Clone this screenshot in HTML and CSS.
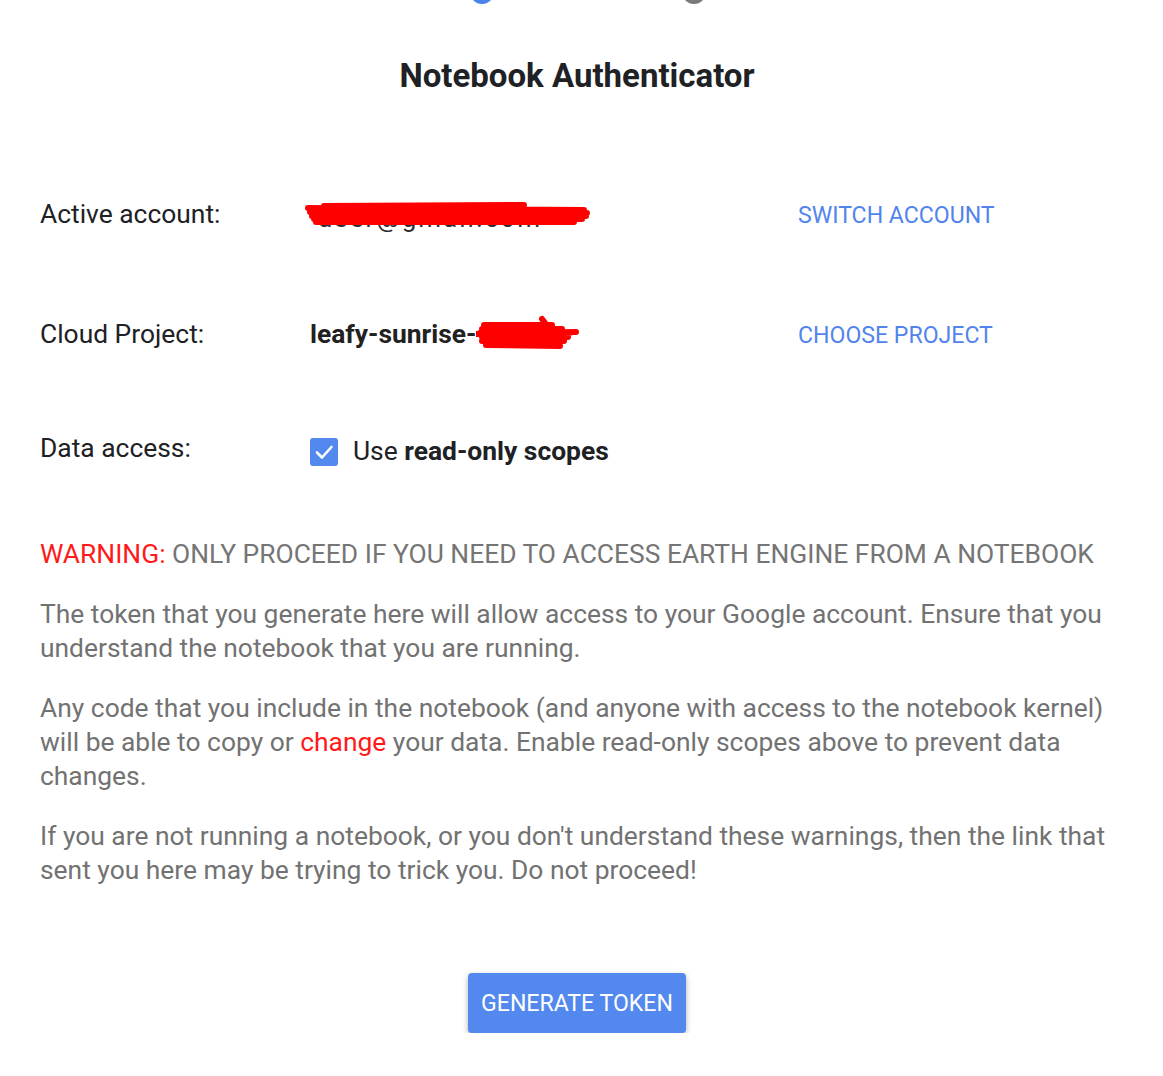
FILE: index.html
```html
<!DOCTYPE html>
<html lang="en">
<head>
<meta charset="utf-8">
<title>Notebook Authenticator</title>
<link rel="stylesheet" href="styles.css">
</head>
<body>
<div class="page">
  <div class="stepper">
    <span class="dot dot-active"></span>
    <span class="dot dot-idle"></span>
  </div>
  <h1 class="title">Notebook Authenticator</h1>

  <div class="settings">
    <div class="label">Active account:</div>
    <div class="value">
      <span class="redacted redacted-account">
        <span class="hidden-text">u&#8203;ser@gmail.com</span>
        <svg class="scribble" width="290" height="34" viewBox="0 0 290 34">
          <path d="M4 10 L280 12 M6 14 L283 15 M8 18 L282 18 M10 21 L278 21 M12 24 L270 24 M20 8 L220 7" stroke="#ff0000" stroke-width="6" stroke-linecap="round" fill="none"/>
        </svg>
      </span>
    </div>
    <div class="action"><a class="link" href="#">SWITCH ACCOUNT</a></div>

    <div class="label">Cloud Project:</div>
    <div class="value">
      <strong class="project">leafy-sunrise-</strong><span class="redacted redacted-project">
        <svg class="scribble" width="106" height="40" viewBox="0 0 106 40">
          <path d="M4 18 L94 18 M6 22 L92 22 M6 26 L88 26 M6 14 L86 14 M10 30 L84 31 M8 10 L76 10 M66 4 L72 12 M0 19 L100 17" stroke="#ff0000" stroke-width="6" stroke-linecap="round" fill="none"/>
        </svg>
      </span>
    </div>
    <div class="action"><a class="link" href="#">CHOOSE PROJECT</a></div>

    <div class="label">Data access:</div>
    <div class="value">
      <label class="check">
        <span class="box">
          <svg width="28" height="28" viewBox="0 0 28 28"><path d="M7 14.5 L12 19.5 L21.5 9" stroke="#fff" stroke-width="2.6" fill="none" stroke-linecap="round" stroke-linejoin="round"/></svg>
        </span>
        <span class="check-text">Use <b>read-only scopes</b></span>
      </label>
    </div>
    <div class="action"></div>
  </div>

  <div class="notes">
    <p class="warning"><span class="red">WARNING:</span> ONLY PROCEED IF YOU NEED TO ACCESS EARTH ENGINE FROM A NOTEBOOK</p>
    <p>The token that you generate here will allow access to your Google account. Ensure that you understand the notebook that you are running.</p>
    <p>Any code that you include in the notebook (and anyone with access to the notebook kernel) will be able to copy or <span class="red">change</span> your data. Enable read-only scopes above to prevent data changes.</p>
    <p>If you are not running a notebook, or you don't understand these warnings, then the link that sent you here may be trying to trick you. Do not proceed!</p>
  </div>

  <div class="actions">
    <button class="generate" type="button">GENERATE TOKEN</button>
  </div>
</div>
</body>
</html>
```

FILE: styles.css
```css
* { box-sizing: border-box; }
html, body { margin: 0; padding: 0; background: #fff; }
body {
  font-family: Roboto, "Liberation Sans", Arial, sans-serif;
  color: #202124;
  overflow: hidden;
}
.page {
  width: 1163px;
  padding: 0 49px 0 40px;
}
.stepper {
  display: flex;
  height: 24px;
  margin-top: -20px;
  padding-left: 430px;
  gap: 188px;
}
.dot {
  width: 24px;
  height: 24px;
  border-radius: 50%;
}
.dot-active { background: #4a83ec; }
.dot-idle { background: #7a7a7a; }
.title {
  margin: 52px 0 0 0;
  font-size: 33px;
  line-height: 40px;
  font-weight: 700;
  text-align: center;
  color: #202124;
}
.settings {
  display: grid;
  grid-template-columns: 270px 488px 1fr;
  grid-template-rows: 34px 34px 34px;
  row-gap: 86px;
  margin-top: 101px;
  font-size: 26.4px;
  line-height: 34px;
}
.settings > div:nth-child(n+7) { margin-top: -6px; }
.label { color: #202124; }
.value { display: flex; align-items: center; }
.redacted { position: relative; display: inline-block; }
.redacted-account { width: 290px; height: 34px; }
.hidden-text {
  position: absolute;
  left: 8px;
  top: 4px;
  font-size: 26px;
  color: #303030;
  letter-spacing: 2px;
}
.scribble { position: absolute; left: 0; top: 0; }
.redacted-account .scribble { left: -6px; top: 1px; }
.project { font-weight: 700; color: #212121; }
.redacted-project { width: 100px; height: 34px; }
.redacted-project .scribble { left: 0; top: -2px; }
.link {
  color: #5284ec;
  text-decoration: none;
  font-size: 23.1px;
}
.check { display: flex; align-items: center; gap: 15px; }
.box {
  width: 28px;
  height: 28px;
  border-radius: 3px;
  background: #5388ee;
  display: inline-flex;
  margin-top: 2px;
}
.check-text b { font-weight: 700; }
.notes {
  margin-top: 66px;
  font-size: 26.4px;
  line-height: 34px;
  color: #727272;
}
.notes p { margin: 0 0 26px 0; }
.warning { color: #757575; }
.red { color: #ff1a1a; }
.actions {
  display: flex;
  justify-content: center;
  margin-top: 86px;
}
.generate {
  width: 218px;
  height: 60px;
  border: none;
  border-radius: 4px;
  background: #5388ee;
  color: #fff;
  font-family: Roboto, "Liberation Sans", Arial, sans-serif;
  font-size: 23.1px;
  box-shadow: 0 3px 5px rgba(0,0,0,0.25), 0 1px 10px rgba(0,0,0,0.08);
  cursor: pointer;
}
```
